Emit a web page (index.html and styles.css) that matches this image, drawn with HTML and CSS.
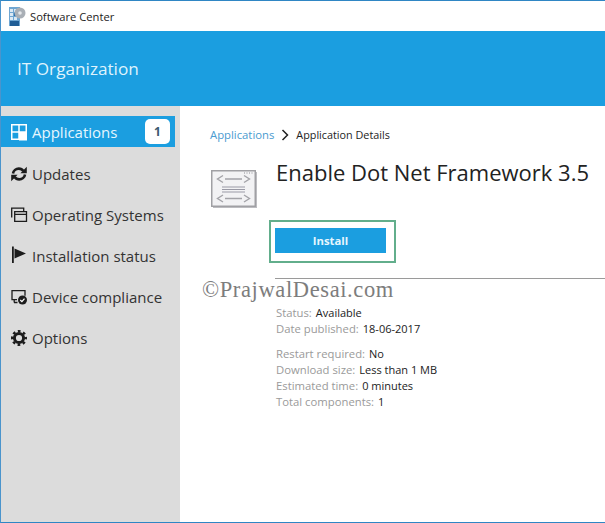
FILE: index.html
```html
<!DOCTYPE html>
<html lang="en">
<head>
<meta charset="utf-8">
<title>Software Center</title>
<link rel="stylesheet" href="styles.css">
</head>
<body>
<div class="window">
  <header class="titlebar">
    <svg class="app-icon" width="17" height="19" viewBox="0 0 17 19">
      <rect x="0" y="0" width="11" height="19" fill="#6fa6d2"/>
      <rect x="1" y="2" width="3" height="3" fill="#dbe8f3"/><rect x="5" y="2" width="3" height="3" fill="#dbe8f3"/>
      <rect x="1" y="6" width="3" height="3" fill="#dbe8f3"/><rect x="5" y="6" width="3" height="3" fill="#2e6ea6"/>
      <rect x="1" y="10" width="3" height="3" fill="#dbe8f3"/><rect x="5" y="10" width="3" height="3" fill="#dbe8f3"/>
      <rect x="1" y="14" width="9" height="5" fill="#1f5d96"/>
      <circle cx="11" cy="6" r="5.500" fill="#a9afb6"/>
      <circle cx="11" cy="6" r="1.800" fill="#e4e7ea"/>
    </svg>
    <span class="app-name">Software Center</span>
  </header>
  <div class="banner">IT Organization</div>
  <div class="body">
    <nav class="sidebar">
      <a class="nav-item active">
        <svg class="nav-icon" viewBox="0 0 16 16"><path fill="none" stroke="#fff" stroke-width="1.500" d="M.75.75h14.500v14.500H.75zM8 .75v14.500M.75 8h14.500"/><rect x="8" y="8" width="8" height="8.500" fill="#fff"/></svg>
        <span class="nav-label">Applications</span>
        <span class="badge">1</span>
      </a>
      <a class="nav-item">
        <svg class="nav-icon" viewBox="0 0 16 16"><path fill="none" stroke="#1c1c1c" stroke-width="2.600" d="M2 7.500C2.400 4.500 5 2.600 7.800 2.600c2 0 3.600.9 4.600 2.400M14 8.500c-.4 3-3 4.900-5.800 4.900-2 0-3.600-.9-4.600-2.400"/><path fill="#1c1c1c" d="M15.800.8v6.400H9.400zM.2 15.200V8.800h6.400z"/></svg>
        <span class="nav-label">Updates</span>
      </a>
      <a class="nav-item">
        <svg class="nav-icon" viewBox="0 0 16 16"><path fill="none" stroke="#1c1c1c" stroke-width="1.300" d="M.7 10.500V1.200h12V4M3.700 4.700h11.800v9.600H3.700zM3.700 7.400h11.800"/></svg>
        <span class="nav-label">Operating Systems</span>
      </a>
      <a class="nav-item">
        <svg class="nav-icon flag" viewBox="0 0 16 16"><path fill="#1c1c1c" d="M1 -1.500h1.800V15H1zM3.500.5L15 5.500 3.500 10.500z"/></svg>
        <span class="nav-label">Installation status</span>
      </a>
      <a class="nav-item">
        <svg class="nav-icon" viewBox="0 0 16 16"><path fill="none" stroke="#1c1c1c" stroke-width="1.300" d="M6 10.700H1V1.700h13v5M3 13.500h3.500M3.200 10.700V13.500"/><circle cx="11.500" cy="11" r="4.500" fill="#1c1c1c"/><path fill="none" stroke="#fff" stroke-width="1.300" d="M9.300 11l1.600 1.600 2.600-3"/></svg>
        <span class="nav-label">Device compliance</span>
      </a>
      <a class="nav-item">
        <svg class="nav-icon" viewBox="0 0 16 16"><circle cx="8" cy="8" r="4.600" fill="none" stroke="#1c1c1c" stroke-width="3"/><circle cx="8" cy="8" r="6.800" fill="none" stroke="#1c1c1c" stroke-width="2.400" stroke-dasharray="2.700 2.640" stroke-dashoffset="1.350"/></svg>
        <span class="nav-label">Options</span>
      </a>
    </nav>
    <main class="content">
      <div class="crumbs">
        <span class="crumb-link">Applications</span>
        <svg class="crumb-sep" width="8" height="12" viewBox="0 0 8 12"><path fill="none" stroke="#222" stroke-width="1.500" d="M1.500 1l5 5-5 5"/></svg>
        <span class="crumb-current">Application Details</span>
      </div>
      <div class="app-head">
        <svg class="pkg-icon" width="46" height="38" viewBox="0 0 46 38">
          <rect x="2" y="2" width="44" height="36" fill="#bcbcc0"/>
          <rect x=".75" y=".75" width="43.500" height="35.500" fill="#f2f2f4" stroke="#a0a0a4" stroke-width="1.500"/>
          <path fill="none" stroke="#8d8d92" stroke-width="1" d="M33 3h1M35.500 3h1M38 3h1M40.500 3h1"/>
          <path fill="none" stroke="#a3a3a8" stroke-width="1.400" d="M12 5.500L6.500 9l5.500 3.500M33 5.500L38.500 9 33 12.500M14 9h17M12 25L6.500 28.500 12 32M33 25l5.500 3.500L33 32M14 28.500h17"/>
          <path fill="none" stroke="#9a9aa6" stroke-width="1.200" d="M11 17h23M11 19.500h23M11 22h23"/>
        </svg>
        <h1 class="app-title">Enable Dot Net Framework 3.5</h1>
      </div>
      <div class="install-frame"><button class="install">Install</button></div>
      <hr class="rule">
      <dl class="meta first">
        <div class="row"><dt>Status:</dt><dd>Available</dd></div>
        <div class="row"><dt>Date published:</dt><dd>18-06-2017</dd></div>
      </dl>
      <dl class="meta">
        <div class="row"><dt>Restart required:</dt><dd>No</dd></div>
        <div class="row"><dt>Download size:</dt><dd>Less than 1 MB</dd></div>
        <div class="row"><dt>Estimated time:</dt><dd>0 minutes</dd></div>
        <div class="row"><dt>Total components:</dt><dd>1</dd></div>
      </dl>
      <div class="watermark">©PrajwalDesai.com</div>
    </main>
  </div>
</div>
</body>
</html>
```
FILE: styles.css
```css
* { box-sizing: border-box; }
html, body { margin: 0; height: 100%; }
body { font-family: "Open Sans", "Noto Sans", sans-serif; background: #fff; overflow: hidden; }
.window { width: 605px; height: 523px; display: flex; flex-direction: column; border-top: 1px solid #2f86c4; border-left: 1px solid #4a94cc; border-bottom: 1px solid #2f86c4; }
.titlebar { height: 30px; flex: none; display: flex; align-items: center; padding-left: 8px; background: #fff; }
.app-icon { margin-right: 4px; }
.app-name { font-size: 11.200px; color: #222; }
.banner { height: 75px; flex: none; background: #1b9ee0; color: #dff3fd; font-size: 17.200px; display: flex; align-items: center; padding: 0 0 0 16px; }
.body { flex: 1; display: flex; min-height: 0; }
.sidebar { width: 179px; flex: none; background: #dcdcdc; padding-top: 10px; display: flex; flex-direction: column; }
.nav-item { height: 41.200px; display: flex; align-items: center; padding-left: 10px; padding-right: 5px; color: #333; font-size: 15px; }
.nav-item.active { height: 31px; width: 174px; background: #1b9ee0; color: #e6f6fe; margin-bottom: 6px; padding-right: 5px; }
.nav-icon { width: 16px; height: 16px; margin-right: 5px; flex: none; overflow: visible; }
.nav-label { flex: 1; white-space: nowrap; }
.badge { width: 25px; height: 25px; border-radius: 5px; background: #fff; color: #3b5a70; font-size: 12px; font-weight: 700; display: flex; align-items: center; justify-content: center; }
.content { flex: 1; position: relative; padding: 20px 0 0 29px; min-width: 0; }
.crumbs { display: flex; align-items: center; height: 17px; gap: 7px; margin-left: 1px; white-space: nowrap; }
.crumb-link { color: #4a9bd0; font-size: 11.300px; }
.crumb-current { color: #222; font-size: 10.800px; }
.app-head { display: flex; align-items: flex-start; margin-top: 14px; padding-left: 2px; }
.pkg-icon { margin: 13px 19px 0 0; flex: none; }
.app-title { margin: 0; font-size: 22px; font-weight: 400; color: #222; white-space: nowrap; line-height: 30px; }
.install-frame { width: 127px; height: 43px; margin: 12px 0 0 60px; border: 2px solid #62ae8c; display: flex; align-items: flex-start; padding: 6px 0 0 4px; }
.install { width: 111px; height: 25px; border: 0; background: #1b9ee0; color: #e6f6fe; font: 700 11.300px "Open Sans", sans-serif; padding: 0; }
.rule { margin: 15px 0 0 66px; border: 0; border-top: 1px solid #9a9a9a; }
.meta { margin: 0 0 0 67px; font-size: 11px; line-height: 16px; }
.meta.first { margin-top: 26px; margin-bottom: 9px; }
.row { display: flex; gap: 4px; white-space: nowrap; }
dt { color: #9a9a9a; font-size: 11.300px; }
dd { margin: 0; color: #222; }
.watermark { position: absolute; left: 22px; top: 171px; font: 22.500px "Liberation Serif", serif; color: #7d7d7d; white-space: nowrap; letter-spacing: .62px; }
```
